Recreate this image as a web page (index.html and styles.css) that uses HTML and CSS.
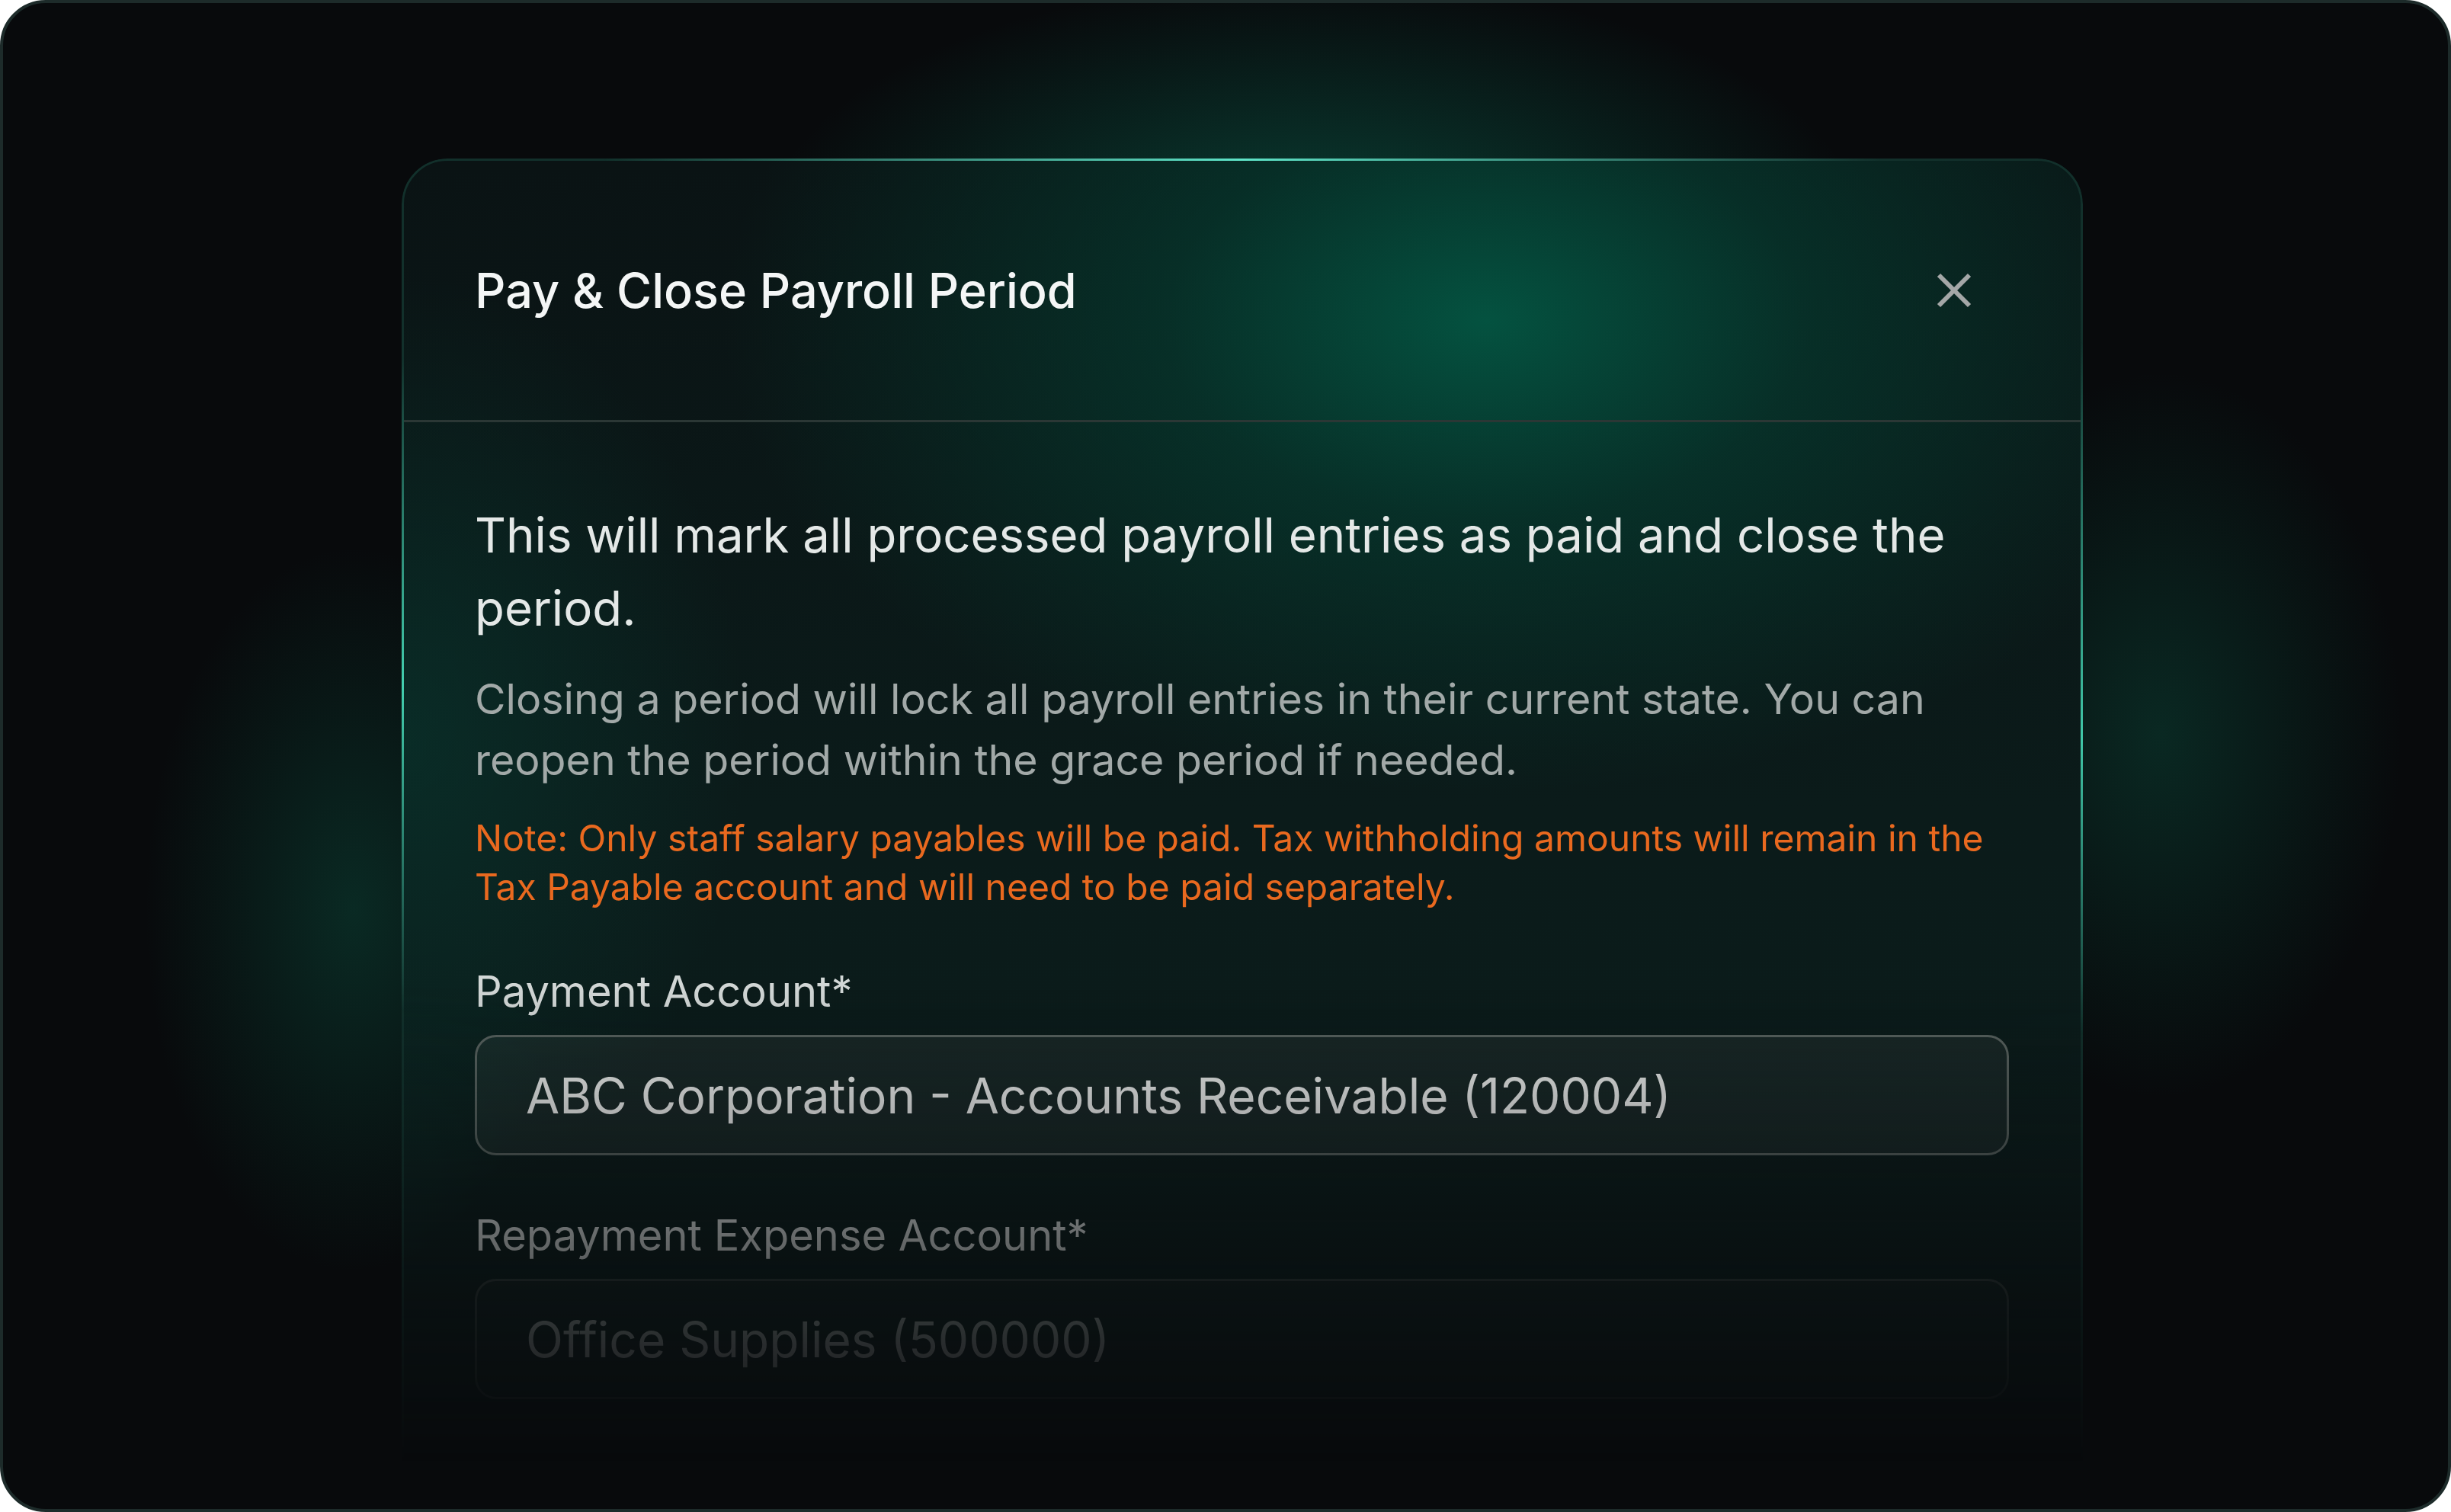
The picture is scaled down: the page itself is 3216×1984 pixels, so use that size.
FILE: index.html
```html
<!DOCTYPE html>
<html lang="en">
<head>
<meta charset="utf-8">
<title>Pay &amp; Close Payroll Period</title>
<link rel="stylesheet" href="styles.css">
</head>
<body>
<div class="frame">
  <div class="modal">
    <header class="modal-header">
      <h2 class="modal-title">Pay &amp; Close Payroll Period</h2>
      <button class="close-btn" aria-label="Close">
        <svg width="46" height="46" viewBox="0 0 46 46"><path d="M3 3 L43 43 M43 3 L3 43" stroke="#a4a7a7" stroke-width="6" fill="none"/></svg>
      </button>
    </header>
    <div class="modal-body">
      <p class="lead">This will mark all processed payroll entries as paid and close the period.</p>
      <p class="muted">Closing a period will lock all payroll entries in their current state. You can reopen the period within the grace period if needed.</p>
      <p class="note">Note: Only staff salary payables will be paid. Tax withholding amounts will remain in the Tax Payable account and will need to be paid separately.</p>
      <div class="field">
        <label class="field-label">Payment Account*</label>
        <div class="select">ABC Corporation - Accounts Receivable (120004)</div>
      </div>
      <div class="field">
        <label class="field-label">Repayment Expense Account*</label>
        <div class="select select-empty">Office Supplies (500000)</div>
      </div>
      <div class="field field-last">
        <label class="field-label">Payment Date*</label>
      </div>
    </div>
  </div>
</div>
</body>
</html>
```
FILE: styles.css
```css
html, body {
  margin: 0;
  padding: 0;
  background: #ffffff;
}

body {
  font-family: "Inter", "Noto Sans", "Liberation Sans", sans-serif;
}

.frame {
  box-sizing: border-box;
  width: 3216px;
  height: 1984px;
  border: 4px solid #1d2b2a;
  border-radius: 60px;
  overflow: hidden;
  padding: 204px 0 0 523px;
  background:
    radial-gradient(ellipse 1000px 460px at 1720px 300px, rgba(10, 98, 78, 0.6), rgba(10, 98, 78, 0) 72%),
    radial-gradient(ellipse 380px 660px at 460px 1190px, rgba(12, 86, 68, 0.42), rgba(12, 86, 68, 0) 72%),
    radial-gradient(ellipse 440px 660px at 2830px 960px, rgba(12, 86, 68, 0.4), rgba(12, 86, 68, 0) 72%),
    #080a0c;
}

.modal {
  position: relative;
  box-sizing: border-box;
  width: 2206px;
  height: 1900px;
  border: 3px solid #12302b;
  border-radius: 60px;
  background:
    radial-gradient(ellipse 1000px 620px at 1420px 210px, rgba(4, 82, 64, 1) 0%, rgba(5, 64, 51, 0.6) 42%, rgba(8, 34, 30, 0) 100%),
    radial-gradient(ellipse 560px 760px at 0px 760px, rgba(8, 62, 52, 0.5), rgba(8, 62, 52, 0) 80%),
    linear-gradient(180deg, #0a1314 0%, #0b1b1a 45%, #0b1c1b 100%);
  -webkit-mask-image: linear-gradient(180deg, #000 0, #000 1080px, rgba(0, 0, 0, 0) 1710px);
  mask-image: linear-gradient(180deg, #000 0, #000 1080px, rgba(0, 0, 0, 0) 1710px);
}

.modal::before {
  content: "";
  position: absolute;
  inset: -3px;
  border-radius: 60px;
  pointer-events: none;
  background:
    linear-gradient(90deg, rgba(80, 220, 190, 0) 12%, rgba(95, 228, 200, 1) 50%, rgba(80, 220, 190, 0) 88%) top center / 100% 3px no-repeat,
    linear-gradient(180deg, rgba(60, 205, 170, 0) 260px, rgba(70, 215, 182, 0.95) 690px, rgba(60, 205, 170, 0) 1120px) left top / 3px 100% no-repeat,
    linear-gradient(180deg, rgba(60, 205, 170, 0) 240px, rgba(70, 215, 182, 0.9) 760px, rgba(60, 205, 170, 0) 1150px) right top / 3px 100% no-repeat;
}

.modal-header {
  box-sizing: border-box;
  height: 343px;
  padding: 0 94px 0 93px;
  display: flex;
  align-items: center;
  justify-content: space-between;
  border-bottom: 3px solid #2b3735;
}

.modal-title {
  margin: 0;
  font-size: 63px;
  font-weight: 500;
  color: #f4f6f6;
}

.close-btn {
  width: 144px;
  height: 144px;
  padding: 0;
  margin: 0;
  border: 0;
  background: transparent;
  display: flex;
  align-items: center;
  justify-content: center;
}

.modal-body {
  padding: 100px 94px 0 93px;
  display: flex;
  flex-direction: column;
}

.lead {
  margin: 0;
  font-size: 63.5px;
  line-height: 96px;
  color: #e4e8e7;
}

.muted {
  margin: 31px 0 0;
  font-size: 55.5px;
  line-height: 80px;
  color: #a2a9a8;
}

.note {
  margin: 31px 0 0;
  font-size: 48px;
  line-height: 64px;
  color: #e9691f;
}

.field {
  display: flex;
  flex-direction: column;
  gap: 19px;
  margin-top: 68px;
}

.field + .field {
  margin-top: 68px;
}

.field-label {
  font-size: 56px;
  line-height: 75px;
  color: #d3d8d7;
}

.select {
  box-sizing: border-box;
  height: 158px;
  padding: 0 64px;
  display: flex;
  align-items: center;
  border: 3px solid #58625f;
  border-radius: 28px;
  background: rgba(255, 255, 255, 0.055);
  font-size: 64px;
  color: #eef0ef;
}

.select-empty {
  border-color: #2c3937;
  background: rgba(255, 255, 255, 0.02);
  color: #8d9695;
}
```
